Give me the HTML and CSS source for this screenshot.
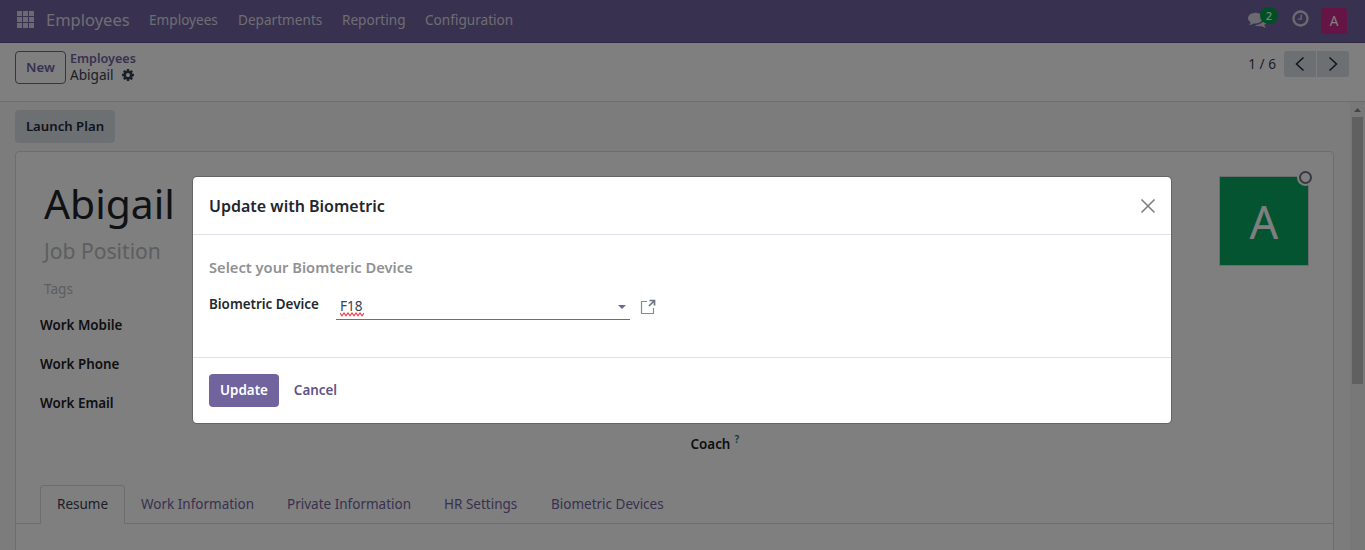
FILE: index.html
```html
<!DOCTYPE html>
<html lang="en">
<head>
<meta charset="utf-8">
<title>Employees - Abigail</title>
<link rel="stylesheet" href="styles.css">
</head>
<body>
<div class="app">
  <header class="navbar">
    <svg class="apps" viewBox="0 0 17 17"><path d="M0 0h5v5H0zM6 0h5v5H6zM12 0h5v5h-5zM0 6h5v5H0zM6 6h5v5H6zM12 6h5v5h-5zM0 12h5v5H0zM6 12h5v5H6zM12 12h5v5h-5z"/></svg>
    <span class="brand">Employees</span>
    <nav class="menu">
      <a class="m-emp">Employees</a><a class="m-dep">Departments</a><a class="m-rep">Reporting</a><a class="m-conf">Configuration</a>
    </nav>
    <div class="systray">
      <span class="messages">
        <svg viewBox="0 0 1792 1792"><path d="M1408 768q0 139-94 257t-256.500 186.500-353.500 68.500q-86 0-176-16-124 88-278 128-36 9-86 16h-3q-11 0-20.500-8t-11.500-21q-1-3-1-6.500t.5-6.500 2-6l2.500-5 3.500-5.500 4-5 4.500-5 4-4.500q5-6 23-25t26-29.500 22.500-29 25-38.500 20.500-44q-124-72-195-177t-71-224q0-139 94-257t256.500-186.500 353.500-68.500 353.500 68.500 256.500 186.500 94 257zm384 256q0 120-71 224.500t-195 176.500q10 24 20.500 44t25 38.500 22.500 29 26 29.500 23 25q1 1 4 4.500t4.500 5 4 5 3.500 5.500l2.500 5 2 6 .5 6.500-1 6.500q-3 14-13 22t-22 7q-50-7-86-16-154-40-278-128-90 16-176 16-271 0-472-132 58 4 88 4 161 0 309-45t264-129q125-92 192-212t67-254q0-77-23-152 129 71 204 178t75 230z"/></svg>
        <b class="badge">2</b>
      </span>
      <svg class="clock" viewBox="0 0 1792 1792"><path d="M1024 544v448q0 14-9 23t-23 9h-320q-14 0-23-9t-9-23v-64q0-14 9-23t23-9h224v-352q0-14 9-23t23-9h64q14 0 23 9t9 23zm416 352q0-148-73-273t-198-198-273-73-273 73-198 198-73 273 73 273 198 198 273 73 273-73 198-198 73-273zm224 0q0 209-103 385.500t-279.500 279.500-385.500 103-385.500-103-279.500-279.500-103-385.500 103-385.500 279.500-279.500 385.500-103 385.500 103 279.500 279.500 103 385.500z"/></svg>
      <span class="user">A</span>
    </div>
  </header>
  <div class="control-panel">
    <button class="btn-new">New</button>
    <div class="crumbs">
      <a class="crumb-parent">Employees</a>
      <div class="crumb-current"><span>Abigail</span>
        <svg viewBox="0 0 1792 1792"><path d="M1152 896q0-106-75-181t-181-75-181 75-75 181 75 181 181 75 181-75 75-181zm512-109v222q0 12-8 23t-20 13l-185 28q-19 54-39 91 35 50 107 138 10 12 10 25t-9 23q-27 37-99 108t-94 71q-12 0-26-9l-138-108q-44 23-91 38-16 136-29 186-7 28-36 28h-222q-14 0-24.500-8.500t-11.500-21.500l-28-184q-49-16-90-37l-141 107q-10 9-25 9-14 0-25-11-126-114-165-168-7-10-7-23 0-12 8-23 15-21 51-66.500t54-70.500q-27-50-41-99l-183-27q-13-2-21-12.500t-8-23.500v-222q0-12 8-23t19-13l186-28q14-46 39-92-40-57-107-138-10-12-10-24 0-10 9-23 26-36 98.500-107.500t94.500-71.500q13 0 26 10l138 107q44-23 91-38 16-136 29-186 7-28 36-28h222q14 0 24.500 8.500t11.500 21.500l28 184q49 16 90 37l142-107q9-9 24-9 13 0 25 10 129 119 165 170 7 8 7 22 0 12-8 23-15 21-51 66.500t-54 70.500q26 50 41 98l183 28q13 2 21 12.500t8 23.500z"/></svg>
      </div>
    </div>
    <div class="pager">
      <span class="count">1 / 6</span>
      <button><svg viewBox="0 0 32 26"><path d="M19.500 6.500 12.500 13l7 6.500"/></svg></button>
      <button><svg viewBox="0 0 32 26"><path d="M12.500 6.500l7 6.500-7 6.500"/></svg></button>
    </div>
  </div>
  <div class="content">
    <main class="form">
      <button class="btn-launch">Launch Plan</button>
      <section class="sheet">
        <div class="head">
          <div>
            <h1 class="name">Abigail</h1>
            <div class="job">Job Position</div>
            <div class="tags">Tags</div>
          </div>
          <div class="avatar">A<i class="presence"></i></div>
        </div>
        <div class="groups">
          <div class="group"><label>Work Mobile</label><label>Work Phone</label><label>Work Email</label></div>
          <div class="group group-right"><label>Coach<sup>?</sup></label></div>
        </div>
        <div class="tabs">
          <a class="tab active">Resume</a><a class="tab t-work">Work Information</a><a class="tab t-private">Private Information</a><a class="tab t-hr">HR Settings</a><a class="tab t-bio">Biometric Devices</a>
        </div>
      </section>
    </main>
    <div class="scrollbar"><svg viewBox="0 0 15 15"><path d="M4 10h7L7.500 6z"/></svg><div class="thumb"></div></div>
  </div>
</div>
<div class="backdrop">
  <div class="modal">
    <div class="modal-head">
      <h2>Update with Biometric</h2>
      <svg viewBox="0 0 16 16"><path d="M1.500 1.500l13 13M14.500 1.500l-13 13"/></svg>
    </div>
    <div class="modal-body">
      <h3>Select your Biomteric Device</h3>
      <div class="field">
        <label>Biometric Device</label>
        <div class="select"><span class="value">F18<svg class="squiggle" viewBox="0 0 24 5"><path d="M0 1l2 2.800L4 1l2 2.800L8 1l2 2.800L12 1l2 2.800L16 1l2 2.800L20 1l2 2.800L24 1"/></svg></span><svg class="caret" viewBox="0 0 8 4"><path d="M0 0h8L4 4z"/></svg></div>
        <svg class="external" viewBox="0 0 16 16"><path class="frame" d="M7 2.500H1.500v12h12V9"/><path class="arrow" d="M9.500 1.500h5V6.500M14.500 1.500 9 7"/></svg>
      </div>
    </div>
    <div class="modal-foot"><button class="btn-update">Update</button><button class="btn-cancel">Cancel</button></div>
  </div>
</div>
</body>
</html>
```
FILE: styles.css
```css
* { box-sizing: border-box; }
body { margin: 0; height: 550px; overflow: hidden; font: 13.6px/20px "Noto Sans", "Open Sans", sans-serif; color: #374151; background: #fff; }
button { font: inherit; border: 0; padding: 0 0 2px; margin: 0; white-space: nowrap; }
svg { display: block; flex: none; }
h1, h2, h3 { margin: 0; }
a, label, span { white-space: nowrap; }
.app { height: 550px; display: flex; flex-direction: column; }

.navbar { height: 43px; flex: none; background: #71639e; border-bottom: 1px solid #5a4f7f; display: flex; align-items: center; padding: 0 17px; color: #fff; }
.apps { width: 17px; height: 17px; fill: #d8d5e2; margin: -4px 12px 0 0; }
.brand { font-size: 16.500px; width: 103px; color: #dedbe8; margin-top: -3px; }
.menu { display: flex; gap: 20px; color: #dedbe8; margin-top: -2px; }
.m-emp { width: 69px; }
.m-dep { width: 84px; }
.m-rep { width: 63px; }
.systray { margin-left: auto; display: flex; align-items: center; height: 40px; margin-top: -1px; }
.messages { position: relative; margin-right: 24px; }
.messages svg, .clock { width: 19px; height: 19px; fill: #d8d5e2; }
.messages svg { margin-top: -3px; }
.clock { margin: -4px 11px 0 0; }
.badge { position: absolute; left: 12px; top: -6px; width: 18px; height: 17px; border-radius: 9px; background: #00a04a; font-size: 11px; line-height: 17px; text-align: center; font-weight: 500; }
.user { width: 26px; height: 26px; border-radius: 3px; background: #cb2a8b; text-align: center; line-height: 25px; margin-right: 1px; }

.control-panel { height: 59px; flex: none; border-bottom: 1px solid #d8dadd; display: flex; align-items: flex-start; padding: 8px 16px 0 15px; }
.btn-new { width: 51px; height: 33px; border: 1px solid #71639e; border-radius: 4px; background: #fff; color: #71639e; font-weight: 600; font-size: 13.200px; margin-right: 4px; }
.crumbs { line-height: 16px; }
.crumb-parent { display: block; color: #71639e; font-weight: 600; font-size: 12.600px; }
.crumb-current { display: flex; align-items: center; gap: 7px; }
.crumb-current svg { width: 14px; height: 14px; fill: #374151; }
.pager { margin-left: auto; display: flex; height: 26px; line-height: 26px; }
.count { margin-right: 8px; }
.pager button { width: 32px; height: 26px; padding: 0; background: #d8e0e6; border-radius: 3px 0 0 3px; }
.pager button + button { border-radius: 0 3px 3px 0; margin-left: 1px; }
.pager svg { width: 32px; height: 26px; fill: none; stroke: #1f2937; stroke-width: 1.5; }

.content { flex: 1; min-height: 0; display: flex; background: #f8f8f9; }
.form { flex: 1; padding: 8px 16px 0 15px; overflow: hidden; }
.btn-launch { display: block; width: 100px; height: 33px; border-radius: 4px; background: #d8e0e6; color: #1f2937; font-weight: 600; font-size: 13.200px; }
.sheet { margin-top: 8px; height: 420px; background: #fff; border: 1px solid #d8dadd; border-radius: 4px; }
.head { display: flex; justify-content: space-between; padding: 24px 24px 0 28px; height: 153px; }
.name { font-size: 40.800px; line-height: 54px; font-weight: 400; color: #1f2429; }
.job { font-size: 21.100px; line-height: 32px; margin-top: 5px; color: #b9bdc3; }
.tags { margin-top: 12px; color: #b9bdc3; }
.avatar { position: relative; width: 90px; height: 90px; border: 1px solid #d8dadd; background: #08a763; color: #fff; font: 45px/90px "Noto Sans", sans-serif; text-align: center; }
.presence { position: absolute; right: -4px; top: -6px; width: 13px; height: 13px; border: 2px solid #6b7280; border-radius: 50%; background: #fff; box-shadow: 0 0 0 2px #fff; }
.groups { display: flex; height: 180px; padding: 0 24px; color: #1c2026; font-weight: 600; font-size: 13.400px; }
.group { width: 650.500px; flex: none; display: flex; flex-direction: column; gap: 19px; padding-top: 10px; }
.group label { height: 20px; }
.group-right { padding-top: 129px; }
sup { color: #017e84; font-size: 10px; line-height: 0; margin-left: 4px; vertical-align: 6px; }
.tabs { display: flex; height: 39px; border-bottom: 1px solid #d8dadd; padding-left: 24px; color: #71639e; }
.tab { height: 39px; line-height: 36px; border: 1px solid transparent; padding-left: 16px; font-size: 13.500px; width: 146px; }
.tab.active { width: 85px; color: #374151; background: #fff; border-color: #d8dadd #d8dadd #fff; border-radius: 4px 4px 0 0; }
.t-work { width: 145px; padding-left: 15px; }
.t-private { width: 157px; }
.t-hr { width: 107px; }
.scrollbar { width: 15px; background: #f1f1f1; }
.scrollbar svg { width: 15px; height: 15px; fill: #888; }
.thumb { width: 11px; height: 267px; margin-left: 2px; background: #c1c1c1; }

.backdrop { position: absolute; inset: 0; background: rgba(0, 0, 0, .5); padding: 176px 193px 0 192px; }
.modal { height: 248px; background: #fff; background-clip: padding-box; border: 1px solid rgba(0, 0, 0, .2); border-radius: 5px; }
.modal-head { height: 58px; display: flex; align-items: center; justify-content: space-between; padding: 0 15px 0 16px; border-bottom: 1px solid #dee2e6; }
.modal-head svg { width: 16px; height: 16px; fill: none; stroke: #7f7f7f; stroke-width: 1.600; }
h2 { font-size: 16px; font-weight: 600; color: #22272e; }
.modal-body { height: 122px; padding: 22px 16px 0; }
h3 { font-size: 14.700px; line-height: 20px; font-weight: 600; color: #8f9194; }
.field { display: flex; margin-top: 17px; }
.field label { width: 127px; color: #22272e; font-weight: 600; font-size: 13.400px; }
.select { width: 294px; height: 26px; border-bottom: 1px solid #71639e; display: flex; justify-content: space-between; padding: 2px 4px 0; }
.value { position: relative; height: 20px; }
.squiggle { position: absolute; left: 0; top: 16px; width: 24px; height: 5px; fill: none; stroke: #f03040; stroke-width: 1.100; }
.caret { width: 8px; height: 4px; margin-top: 9px; fill: #71639e; }
.external { width: 16px; height: 16px; margin: 5px 0 0 10px; fill: none; }
.frame { stroke: #6f9c80; stroke-width: 1.200; }
.arrow { stroke: #6b7280; stroke-width: 1.700; }
.modal-foot { border-top: 1px solid #dee2e6; padding: 16px; display: flex; gap: 4px; }
.btn-update { width: 70px; height: 33px; border-radius: 4px; background: #71639e; color: #fff; font-weight: 600; font-size: 13.400px; }
.btn-cancel { width: 65px; height: 33px; background: none; color: #5f5389; font-weight: 600; font-size: 13.400px; }
```
